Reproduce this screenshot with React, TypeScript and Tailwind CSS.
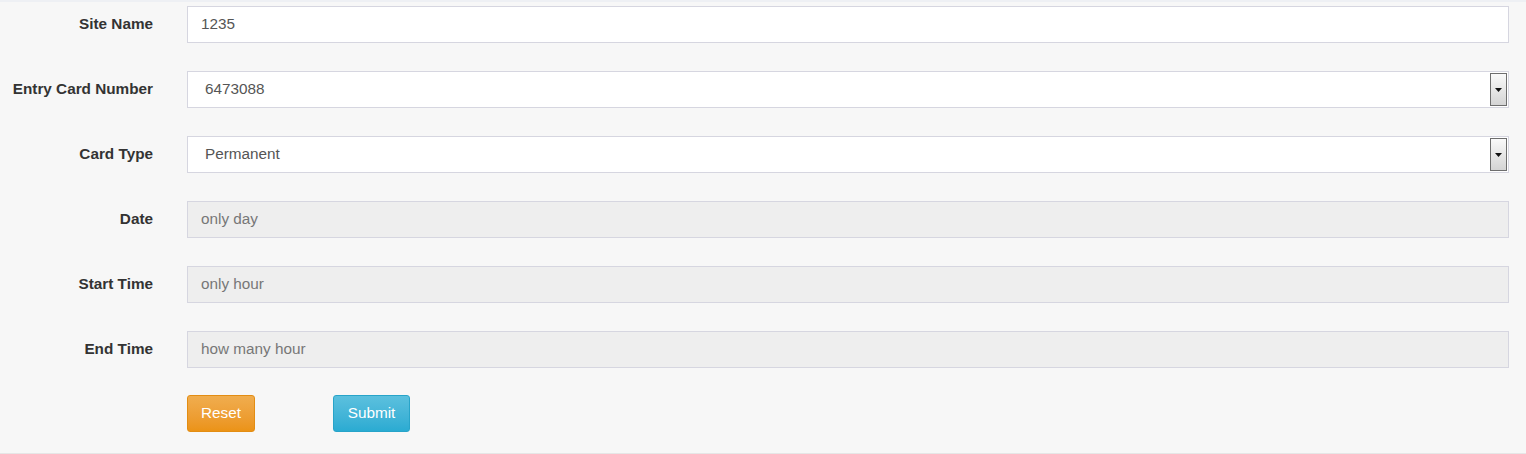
import React from "react";

const font = { fontFamily: '"Liberation Sans", Arial, Helvetica, sans-serif' };

function Label({ children }: { children: React.ReactNode }) {
  return (
    <div className="w-[153px] shrink-0 self-start text-right text-[15.3px] font-bold text-[#333333] leading-[35px] whitespace-nowrap">
      {children}
    </div>
  );
}

function TextRow({ label, value }: { label: string; value: string }) {
  return (
    <div className="flex h-[37px] items-center">
      <Label>{label}</Label>
      <div className="ml-[34px] flex h-[37px] w-[1322px] items-center border border-[#d6d6e0] bg-white pl-[13px] text-[15.3px] text-[#555555]">
        {value}
      </div>
    </div>
  );
}

function SelectRow({ label, value }: { label: string; value: string }) {
  return (
    <div className="flex h-[37px] items-center">
      <Label>{label}</Label>
      <div className="relative ml-[34px] flex h-[37px] w-[1322px] items-center border border-[#d6d6e0] bg-white pl-[17px] text-[15.3px] text-[#555555]">
        {value}
        <div className="absolute right-[1px] top-[1px] flex h-[33px] w-[17px] items-center justify-center border border-[#6e6e6e] bg-gradient-to-b from-[#fafafa] to-[#d4d4d4]">
          <svg width="7" height="4" viewBox="0 0 7 4">
            <path d="M0 0H7L3.5 4Z" fill="#111" />
          </svg>
        </div>
      </div>
    </div>
  );
}

function DisabledRow({ label, value }: { label: string; value: string }) {
  return (
    <div className="flex h-[37px] items-center">
      <Label>{label}</Label>
      <div className="ml-[34px] flex h-[37px] w-[1322px] items-center border border-[#d6d6e0] bg-[#eeeeee] pl-[13px] text-[15.3px] text-[#777777]">
        {value}
      </div>
    </div>
  );
}

export default function App() {
  return (
    <div className="h-[454px] w-[1526px] bg-[#f7f7f7]" style={font}>
      <div className="h-[2px] bg-[#eef0f4]" />
      <div className="flex flex-col gap-[28px] pt-[4px]">
        <TextRow label="Site Name" value="1235" />
        <SelectRow label="Entry Card Number" value="6473088" />
        <SelectRow label="Card Type" value="Permanent" />
        <DisabledRow label="Date" value="only day" />
        <DisabledRow label="Start Time" value="only hour" />
        <DisabledRow label="End Time" value="how many hour" />
      </div>
      <div className="ml-[187px] mt-[27px] flex h-[37px] gap-[78px]">
        <button className="h-[37px] w-[68px] rounded-[3px] border border-[#e38d13] bg-gradient-to-b from-[#f0ad4e] to-[#eb9316] text-[15.3px] text-white">
          Reset
        </button>
        <button className="h-[37px] w-[77px] rounded-[3px] border border-[#28a4c9] bg-gradient-to-b from-[#5bc0de] to-[#2aabd2] text-[15.3px] text-white">
          Submit
        </button>
      </div>
      <div className="mt-[21px] h-[1px] bg-[#e6e6e6]" />
    </div>
  );
}
